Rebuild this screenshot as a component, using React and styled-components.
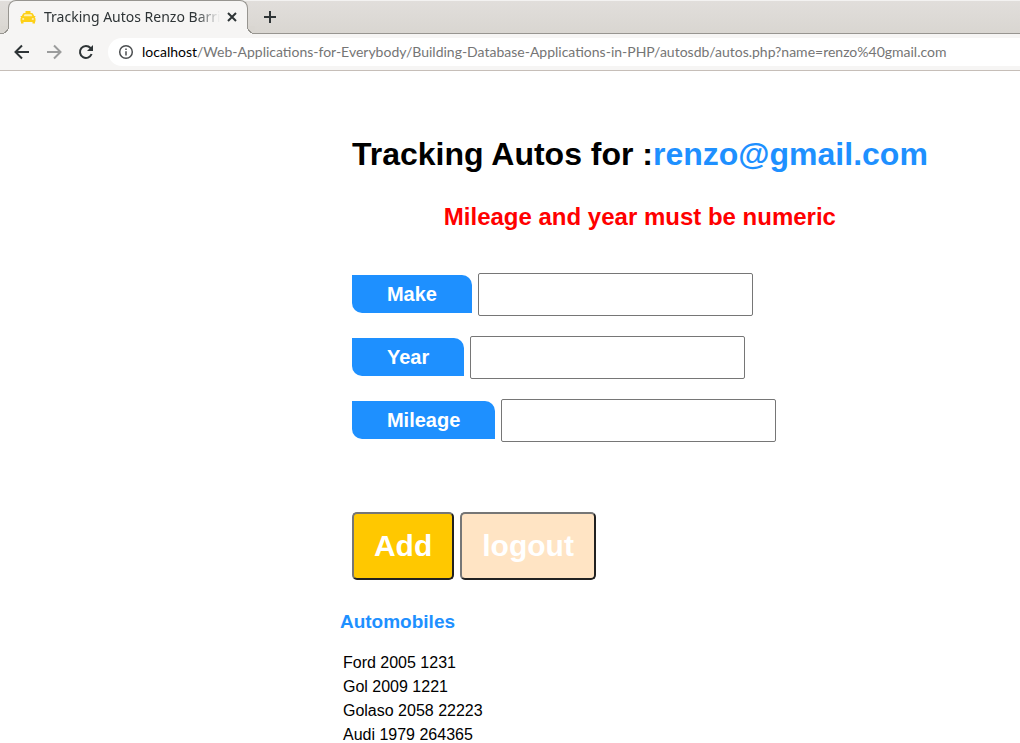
import React from "react";
import styled, { createGlobalStyle } from "styled-components";

const GlobalStyle = createGlobalStyle`
  *, *::before, *::after { box-sizing: border-box; }
  body { margin: 0; background: #fff; color: #000; font-family: "Liberation Sans", Arial, sans-serif; }
`;

const Window = styled.div`
  display: flex;
  flex-direction: column;
  height: 100vh;
  overflow: hidden;
`;

const TabStrip = styled.div`
  display: flex;
  gap: 6px;
  height: 34px;
  flex: none;
  padding-left: 8px;
  background: linear-gradient(#e1dedb, #d9d6d1);
  border-top: 1px solid #f3f2f1;
  border-bottom: 1px solid #979590;
  font-family: "Noto Sans", sans-serif;
`;

const Tab = styled.div`
  position: relative;
  display: flex;
  align-items: center;
  width: 240px;
  height: 34px;
  margin-top: -1px;
  padding: 0 7px 2px 11px;
  background: #f6f5f4;
  border: 1px solid #979590;
  border-bottom: 0;
  border-radius: 8px 8px 0 0;

  &::before,
  &::after {
    content: "";
    position: absolute;
    bottom: 0;
    width: 8px;
    height: 8px;
  }
  &::before {
    left: -8px;
    background: radial-gradient(circle at 0 0, #d9d6d1 7px, #979590 7px, #979590 8px, #f6f5f4 8px);
  }
  &::after {
    right: -8px;
    background: radial-gradient(circle at 100% 0, #d9d6d1 7px, #979590 7px, #979590 8px, #f6f5f4 8px);
  }
`;

const TabTitle = styled.span`
  flex: 1;
  min-width: 0;
  margin: 0 4px 0 8px;
  overflow: hidden;
  white-space: nowrap;
  font-size: 14px;
  line-height: 20px;
  color: #2e3436;
  mask-image: linear-gradient(to right, #000 calc(100% - 24px), transparent);
`;

const IconButton = styled.button`
  display: grid;
  place-items: center;
  flex: none;
  width: ${(p) => p.$size || 32}px;
  height: ${(p) => p.$size || 32}px;
  padding: 0;
  border: 0;
  background: none;
  color: ${(p) => (p.disabled ? "#9b9c9c" : "#2e3436")};
`;

const Toolbar = styled.div`
  display: flex;
  align-items: center;
  flex: none;
  height: 37px;
  padding-left: 6px;
  background: #f6f5f4;
  border-bottom: 1px solid #c6beb8;
`;

const AddressBar = styled.div`
  display: flex;
  align-items: center;
  flex: 1;
  min-width: 0;
  height: 28px;
  margin-left: 6px;
  padding-left: 10px;
  background: #fff;
  border-radius: 14px 0 0 14px;
  color: #4b4e50;
`;

const Address = styled.div`
  margin-left: 8px;
  overflow: hidden;
  white-space: nowrap;
  font: 14px/20px Lato, "Noto Sans", sans-serif;
  color: #757575;
`;

const Host = styled.span`
  color: #000;
`;

const Page = styled.main`
  flex: 1;
  min-height: 0;
  overflow-y: auto;
  scrollbar-width: none;
  padding: 64px 0 0 33.33%;
`;

const Tracker = styled.section`
  width: fit-content;
  padding-left: 12px;
`;

const Title = styled.h1`
  margin: 0;
  font-size: 32px;
  line-height: 38px;
  white-space: nowrap;
`;

const Email = styled.span`
  color: dodgerblue;
`;

const ErrorMessage = styled.p`
  margin: 30px 0 42px;
  color: #f00;
  font-size: 24px;
  font-weight: bold;
  line-height: 28px;
  text-align: center;
`;

const Field = styled.div`
  display: flex;
  align-items: flex-start;
  gap: 6px;
  margin-bottom: 20px;
`;

const FieldLabel = styled.label`
  margin-top: 2px;
  padding: 7px 35px;
  background: dodgerblue;
  border-radius: 0 10px;
  color: #fff;
  font-size: 20px;
  font-weight: bold;
  line-height: 24px;
`;

const FieldInput = styled.input`
  width: 275px;
  height: 43px;
  padding: 0 10px;
  border: 1px solid #767676;
  border-radius: 2px;
  background: #fff;
  font: 20px "Liberation Sans", Arial, sans-serif;
`;

const Actions = styled.div`
  display: flex;
  gap: 6px;
  margin-top: 70px;
`;

const ActionButton = styled.button`
  padding: 15px 20px;
  border: 2px solid;
  border-color: #767676 #212121 #212121 #767676;
  border-radius: 5px;
  background: ${(p) => p.$color};
  color: #fff;
  font: bold 30px/34px "Liberation Sans", Arial, sans-serif;
`;

const ListTitle = styled.h2`
  margin: 31px 0 18px;
  color: dodgerblue;
  font-size: 19px;
  line-height: 22px;
`;

const AutoList = styled.ul`
  margin: 0;
  padding: 0 0 0 3px;
  list-style: none;
  font-size: 16px;
  line-height: 24px;
`;

const fields = [
  { id: "make", label: "Make" },
  { id: "year", label: "Year" },
  { id: "mileage", label: "Mileage" },
];

const autos = ["Ford 2005 1231", "Gol 2009 1221", "Golaso 2058 22223", "Audi 1979 264365"];

const Stroke = ({ width = 2, children }) => (
  <svg width="16" height="16" viewBox="0 0 16 16" fill="none" stroke="currentColor" strokeWidth={width} aria-hidden="true">
    {children}
  </svg>
);

const TaxiIcon = () => (
  <svg width="16" height="16" viewBox="0 0 16 16" aria-hidden="true">
    <path
      fill="#fdd017"
      d="M5.5 2h5v2h1c.9 0 1.5.4 1.8 1.2L14.2 7h.8c.6 0 .7.9.2 1.1l-.5.2c.5.4.8.9.8 1.7v2c0 .5-.2.8-.5 1v1.500h-2.500V13h-9v1.500H1V13c-.3-.2-.5-.5-.5-1v-2c0-.8.3-1.300.8-1.700l-.5-.2C.3 7.900.4 7 1 7h.8l.9-1.800C3 4.400 3.600 4 4.500 4h1z"
    />
    <path fill="#fdf0b4" d="M4.600 5.300h6.800l.9 1.900H3.700z" />
    <circle cx="3.200" cy="10" r="1.100" fill="#fdeeb0" />
    <circle cx="12.800" cy="10" r="1.100" fill="#fdeeb0" />
  </svg>
);

export default function App() {
  return (
    <>
      <GlobalStyle />
      <Window>
        <TabStrip>
          <Tab>
            <TaxiIcon />
            <TabTitle>Tracking Autos Renzo Barrios</TabTitle>
            <IconButton $size={16} aria-label="Close tab">
              <Stroke>
                <path d="M4 4l8 8M12 4l-8 8" />
              </Stroke>
            </IconButton>
          </Tab>
          <IconButton aria-label="New tab">
            <Stroke>
              <path d="M8 2v12M2 8h12" />
            </Stroke>
          </IconButton>
        </TabStrip>
        <Toolbar>
          <IconButton aria-label="Back">
            <Stroke>
              <path d="M15 8H2M8 1.5L1.5 8 8 14.5" />
            </Stroke>
          </IconButton>
          <IconButton aria-label="Forward" disabled>
            <Stroke>
              <path d="M1 8h13M8 1.5L14.5 8 8 14.5" />
            </Stroke>
          </IconButton>
          <IconButton aria-label="Reload">
            <Stroke>
              <path d="M13.6 10A6 6 0 1 1 12.5 4L14 5.5" />
              <path d="M15 1v6H9z" fill="currentColor" stroke="none" />
            </Stroke>
          </IconButton>
          <AddressBar>
            <Stroke width={1.5}>
              <circle cx="8" cy="8" r="6.3" />
              <path d="M8 7.2v4.3M8 4.5v1.6" />
            </Stroke>
            <Address>
              <Host>localhost</Host>
              /Web-Applications-for-Everybody/Building-Database-Applications-in-PHP/autosdb/autos.php?name=renzo%40gmail.com
            </Address>
          </AddressBar>
        </Toolbar>
        <Page>
          <Tracker>
            <Title>
              Tracking Autos for :<Email>renzo@gmail.com</Email>
            </Title>
            <ErrorMessage role="alert">Mileage and year must be numeric</ErrorMessage>
            <form onSubmit={(e) => e.preventDefault()}>
              {fields.map(({ id, label }) => (
                <Field key={id}>
                  <FieldLabel htmlFor={id}>{label}</FieldLabel>
                  <FieldInput id={id} name={id} type="text" />
                </Field>
              ))}
              <Actions>
                <ActionButton type="submit" $color="#ffc800">Add</ActionButton>
                <ActionButton type="button" $color="bisque">logout</ActionButton>
              </Actions>
            </form>
          </Tracker>
          <ListTitle>Automobiles</ListTitle>
          <AutoList>
            {autos.map((auto) => (
              <li key={auto}>{auto}</li>
            ))}
          </AutoList>
        </Page>
      </Window>
    </>
  );
}
